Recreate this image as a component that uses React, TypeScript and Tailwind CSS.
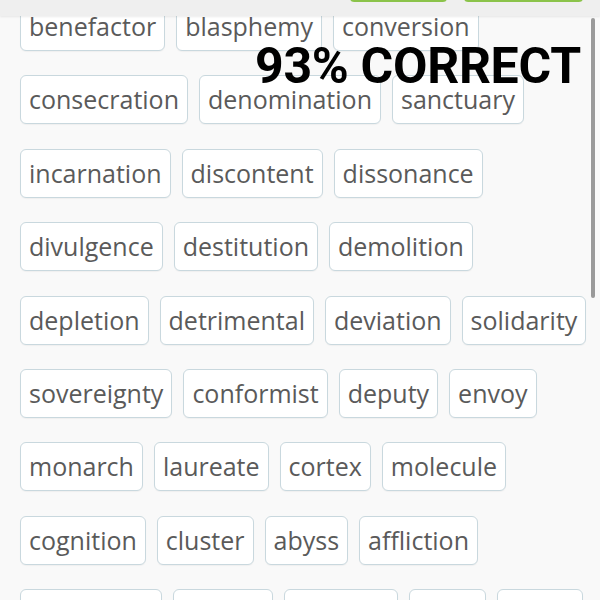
import React from "react";

const rows: string[][] = [
  ["benefactor", "blasphemy", "conversion"],
  ["consecration", "denomination", "sanctuary"],
  ["incarnation", "discontent", "dissonance"],
  ["divulgence", "destitution", "demolition"],
  ["depletion", "detrimental", "deviation", "solidarity"],
  ["sovereignty", "conformist", "deputy", "envoy"],
  ["monarch", "laureate", "cortex", "molecule"],
  ["cognition", "cluster", "abyss", "affliction"],
];

const lastRow: { w: string; width: string }[] = [
  { w: "benevolent", width: "w-[142px]" },
  { w: "plight", width: "w-[100px]" },
  { w: "inertia", width: "w-[114px]" },
  { w: "levy", width: "w-[77px]" },
  { w: "feign", width: "w-[86px]" },
];

const chipBase =
  "h-[49px] shrink-0 rounded-[6px] border border-[#c9d8de] bg-white px-[8px] flex items-center text-[25px] leading-none text-[#5a5a5a] font-['Open_Sans',sans-serif] shadow-[0_1px_1px_rgba(0,0,0,0.04)]";

function Chip({ word }: { word: string }) {
  return <div className={chipBase}>{word}</div>;
}

export default function App() {
  return (
    <div className="relative w-[600px] h-[600px] overflow-hidden bg-[#f9f9f9]">
      <div className="flex flex-col gap-[24.4px] pl-[20px] pt-[2px]">
        {rows.map((r, i) => (
          <div key={i} className="flex gap-[11px]">
            {r.map((w) => (
              <Chip key={w} word={w} />
            ))}
          </div>
        ))}
        <div className="flex gap-[11px]">
          {lastRow.map((c) => (
            <div key={c.w} className={`${chipBase} ${c.width} overflow-hidden`}>
              {c.w}
            </div>
          ))}
        </div>
      </div>

      {/* sticky header overlaying the scrolled content */}
      <div className="absolute inset-x-0 top-0 h-[16px] bg-[#efefef] shadow-[0_1px_2px_rgba(0,0,0,0.08)] flex items-end gap-[17px] pl-[350px] pb-[14px]">
        <div className="w-[97px] h-[12px] shrink-0 rounded-[4px] border-2 border-[#8bc34a] bg-[#f4f9ee]" />
        <div className="w-[119px] h-[12px] shrink-0 rounded-[4px] border-2 border-[#8bc34a] bg-[#f4f9ee]" />
      </div>

      {/* scrollbar thumb */}
      <div className="absolute right-[5px] top-[18px] w-[4px] h-[280px] rounded-full bg-[#9a9a9a]" />

      {/* result overlay */}
      <div className="absolute left-[255px] top-[41px] text-[50px] leading-none font-bold text-black font-['Roboto',sans-serif] tracking-[-0.3px]">
        93% CORRECT
      </div>
    </div>
  );
}
